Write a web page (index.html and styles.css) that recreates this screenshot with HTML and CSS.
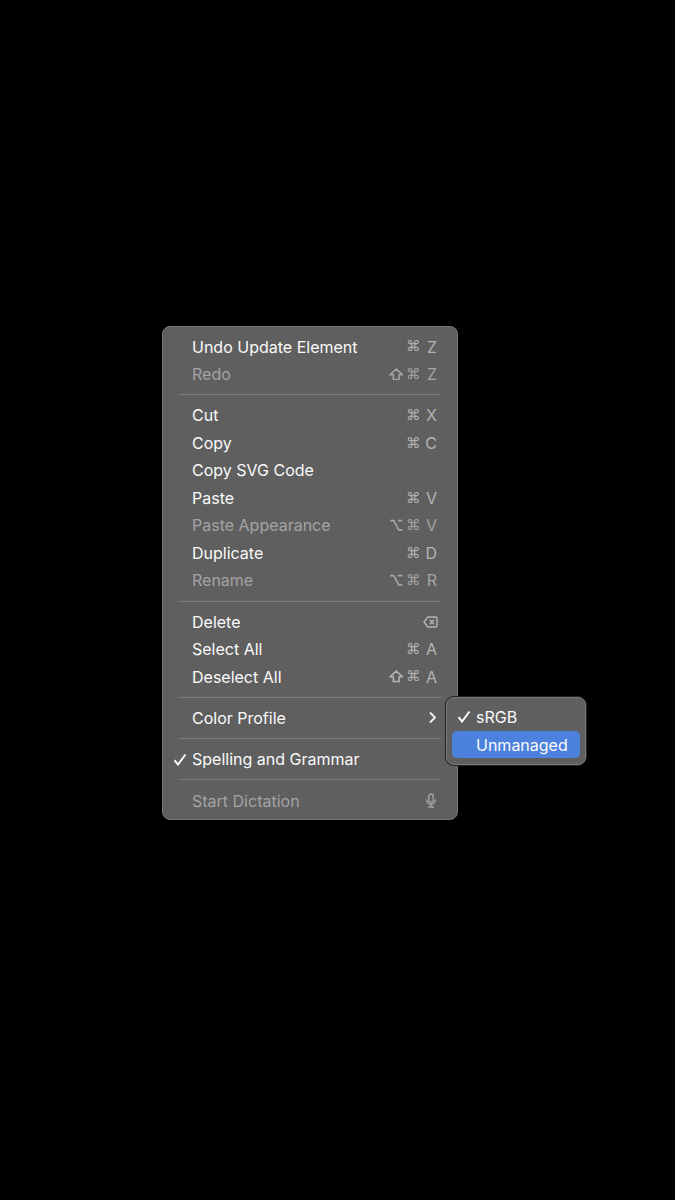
FILE: index.html
```html
<!DOCTYPE html>
<html lang="en">
<head>
<meta charset="utf-8">
<title>Context menu</title>
<link rel="stylesheet" href="styles.css">
</head>
<body>
<div class="menu">
  <div class="row"><span class="label">Undo Update Element</span><span class="keys"><span class="mods"><span class="cmd">⌘</span></span><span class="key">Z</span></span></div>
  <div class="row off"><span class="label">Redo</span><span class="keys"><span class="mods"><svg class="shift" viewBox="0 0 14 12"><path d="M7 1 13 6.5H9.8V11H4.2V6.5H1Z"/></svg><span class="cmd">⌘</span></span><span class="key">Z</span></span></div>
  <div class="sep"></div>
  <div class="row"><span class="label">Cut</span><span class="keys"><span class="mods"><span class="cmd">⌘</span></span><span class="key">X</span></span></div>
  <div class="row"><span class="label">Copy</span><span class="keys"><span class="mods"><span class="cmd">⌘</span></span><span class="key">C</span></span></div>
  <div class="row"><span class="label">Copy SVG Code</span></div>
  <div class="row"><span class="label">Paste</span><span class="keys"><span class="mods"><span class="cmd">⌘</span></span><span class="key">V</span></span></div>
  <div class="row off"><span class="label">Paste Appearance</span><span class="keys"><span class="mods"><svg class="opt" viewBox="0 0 14 12"><path d="M1 1.5H4.6L9.4 10.5H13M8.6 1.5H13"/></svg><span class="cmd">⌘</span></span><span class="key">V</span></span></div>
  <div class="row"><span class="label">Duplicate</span><span class="keys"><span class="mods"><span class="cmd">⌘</span></span><span class="key">D</span></span></div>
  <div class="row off"><span class="label">Rename</span><span class="keys"><span class="mods"><svg class="opt" viewBox="0 0 14 12"><path d="M1 1.5H4.6L9.4 10.5H13M8.6 1.5H13"/></svg><span class="cmd">⌘</span></span><span class="key">R</span></span></div>
  <div class="sep"></div>
  <div class="row"><span class="label">Delete</span><span class="keys"><svg class="del" viewBox="0 0 15 12"><path d="M4.8 1H12.6A1.4 1.4 0 0 1 14 2.4V9.6A1.4 1.4 0 0 1 12.6 11H4.8L1 6ZM6.8 3.8 11 8.2M11 3.8 6.8 8.2"/></svg></span></div>
  <div class="row"><span class="label">Select All</span><span class="keys"><span class="mods"><span class="cmd">⌘</span></span><span class="key">A</span></span></div>
  <div class="row"><span class="label">Deselect All</span><span class="keys"><span class="mods"><svg class="shift" viewBox="0 0 14 12"><path d="M7 1 13 6.5H9.8V11H4.2V6.5H1Z"/></svg><span class="cmd">⌘</span></span><span class="key">A</span></span></div>
  <div class="sep"></div>
  <div class="row"><span class="label">Color Profile</span><span class="keys"><svg class="chev" viewBox="0 0 9 13"><path d="M2 1.5 7 6.5 2 11.5"/></svg></span></div>
  <div class="sep"></div>
  <div class="row"><svg class="check" viewBox="0 0 14 13"><path d="M1.5 7.2 5 11.5 12.5 1.5"/></svg><span class="label">Spelling and Grammar</span></div>
  <div class="sep"></div>
  <div class="row off"><span class="label">Start Dictation</span><span class="keys"><svg class="mic" viewBox="0 0 12 15"><rect x="3.8" y="1" width="4.4" height="8" rx="2.2"/><path d="M1.5 6.5A4.5 4.5 0 0 0 10.5 6.5M6 11V13.6M3 14H9"/></svg></span></div>

  <div class="submenu">
    <div class="subrow"><svg class="check" viewBox="0 0 14 13"><path d="M1.5 7.2 5 11.5 12.5 1.5"/></svg><span>sRGB</span></div>
    <div class="subrow active"><span>Unmanaged</span></div>
  </div>
</div>
</body>
</html>
```
FILE: styles.css
```css
* { box-sizing: border-box; }
html, body { margin: 0; height: 100%; background: #000; }
body { font-family: Inter, "Liberation Sans", sans-serif; overflow: hidden; }

.menu {
  position: absolute;
  left: 162px;
  top: 326px;
  width: 296px;
  height: 494px;
  padding: 5.9px 0 0;
  background: #5f5f5f;
  border: 1px solid #777;
  border-radius: 8px;
}

.row {
  position: relative;
  display: flex;
  align-items: center;
  justify-content: space-between;
  height: 27.5px;
  padding: 0 20px 0 29px;
  font-size: 16px;
  color: #fafafa;
}
.row.off { color: #a4a4a4; }
.label { white-space: nowrap; }

.keys { display: flex; align-items: center; color: #b4b4b4; }
.row.off .keys { color: #a4a4a4; }
.mods { display: flex; align-items: center; gap: 3px; }
.cmd { font-family: "DejaVu Sans", sans-serif; font-size: 14.5px; line-height: 1; }
.key { width: 16.5px; text-align: right; font-size: 16px; }

.keys svg, .check { fill: none; stroke: currentColor; }
.shift { width: 14.5px; height: 12.5px; stroke-width: 1.5; }
.opt { width: 14.5px; height: 12.5px; stroke-width: 1.6; }
.del { width: 15px; height: 12px; stroke-width: 1.4; margin-right: -1px; }
.chev { width: 9px; height: 13px; stroke-width: 1.9; color: #f0f0f0; }
.mic { width: 12px; height: 15px; stroke-width: 1.4; }

.row .check {
  position: absolute;
  left: 10px;
  top: 7px;
  width: 14px;
  height: 13px;
  stroke-width: 2;
  color: #fafafa;
}

.sep {
  height: 1px;
  margin: 6.4px 16px;
  background: #7d7d7d;
}

.submenu {
  position: absolute;
  left: 283px;
  top: 370px;
  width: 140px;
  height: 68px;
  padding: 5.4px 5px 0;
  background: #5f5f5f;
  border: 1px solid #7d7d7d;
  border-radius: 8px;
  box-shadow: 0 0 0 1px #222;
}

.subrow {
  position: relative;
  display: flex;
  align-items: center;
  height: 27.5px;
  padding-left: 24px;
  font-size: 16px;
  color: #fafafa;
  border-radius: 5px;
}
.subrow.active { background: #4d81de; }
.subrow .check {
  position: absolute;
  left: 5px;
  top: 7px;
  width: 14px;
  height: 13px;
  fill: none;
  stroke: currentColor;
  stroke-width: 2;
}
```
